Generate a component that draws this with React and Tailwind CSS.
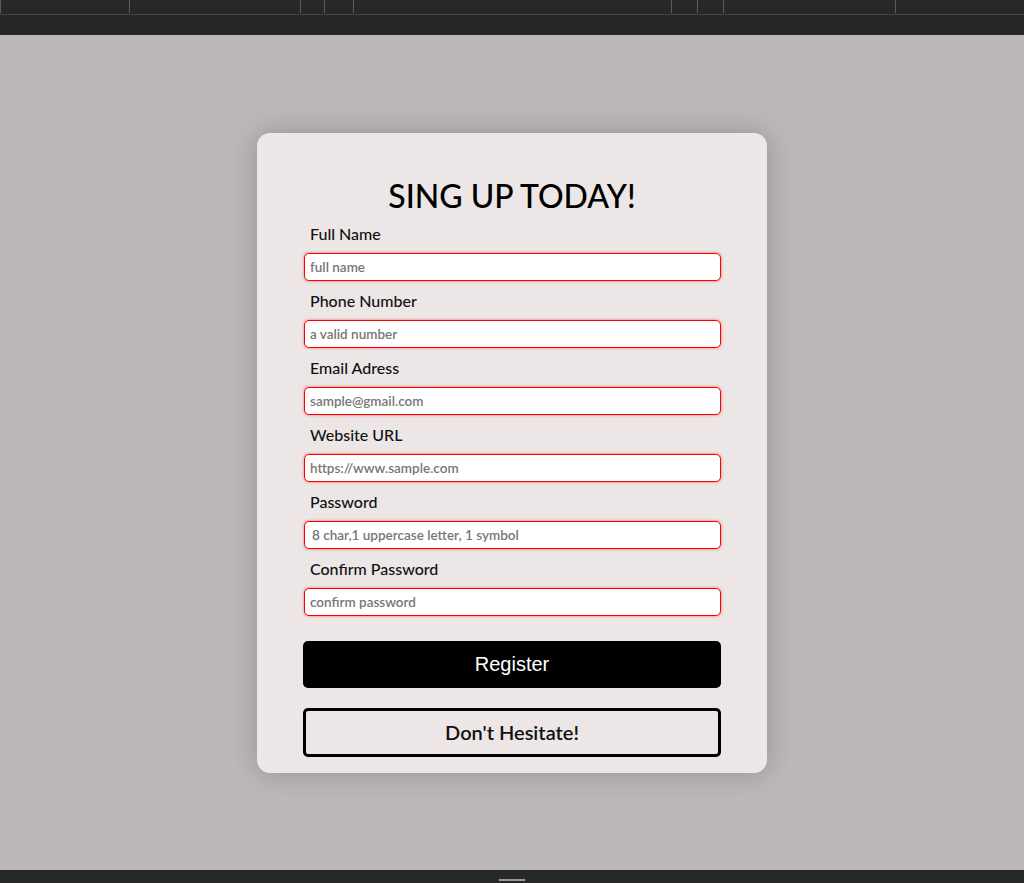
import React from 'react';

const fields = [
  { label: 'Full Name', placeholder: 'full name' },
  { label: 'Phone Number', placeholder: 'a valid number' },
  { label: 'Email Adress', placeholder: 'sample@gmail.com' },
  { label: 'Website URL', placeholder: 'https://www.sample.com' },
  { label: 'Password', placeholder: '8 char,1 uppercase letter, 1 symbol', indent: true },
  { label: 'Confirm Password', placeholder: 'confirm password' },
];

const TopBar = () => (
  <div className="shrink-0">
    <div className="h-[14px] bg-[#27282a] flex">
      <div className="w-px h-[13px] bg-[#5c5c5c]" />
      <div className="w-[128px]" />
      <div className="w-px h-[13px] bg-[#5c5c5c]" />
      <div className="w-[170px]" />
      <div className="w-px h-[13px] bg-[#5c5c5c]" />
      <div className="w-[23px]" />
      <div className="w-px h-[13px] bg-[#5c5c5c]" />
      <div className="w-[28px]" />
      <div className="w-px h-[13px] bg-[#5c5c5c]" />
      <div className="w-[317px]" />
      <div className="w-px h-[13px] bg-[#5c5c5c]" />
      <div className="w-[25px]" />
      <div className="w-px h-[13px] bg-[#5c5c5c]" />
      <div className="w-[25px]" />
      <div className="w-px h-[13px] bg-[#5c5c5c]" />
      <div className="w-[171px]" />
      <div className="w-px h-[13px] bg-[#5c5c5c]" />
    </div>
    <div className="h-px bg-[#454545]" />
    <div className="h-[20px] bg-[#272727]" />
  </div>
);

const BottomBar = () => (
  <div className="shrink-0 h-[13px] bg-[#27282a] flex justify-center items-end pb-[2px]">
    <div className="w-[26px] h-[2px] bg-[#9a9a9a]" />
  </div>
);

export default function App() {
  return (
    <div className="h-[883px] flex flex-col bg-[#bcb8b7] font-['Lato','Noto_Sans',sans-serif]">
      <TopBar />
      <main className="flex-1 flex items-center justify-center">
        <div className="w-[510px] h-[640px] bg-[#ece6e6] rounded-[13px] shadow-[0_0_28px_rgba(0,0,0,0.22)] px-[46px] pt-[44px] pb-[16px] flex flex-col">
          <h1 className="text-[32px] leading-[38px] font-medium text-black text-center">
            SING UP TODAY!
          </h1>
          <form className="flex flex-col mt-[9px]">
            {fields.map((f) => (
              <div key={f.label} className="flex flex-col">
                <label className="pl-[7px] text-[16px] leading-[19px] font-medium text-[#111]">{f.label}</label>
                <input
                  type="text"
                  placeholder={f.placeholder}
                  className={
                    'mt-[10px] mb-[10px] h-[28px] ml-px w-[417px] bg-white border border-[#ff0000] rounded-[5px] shadow-[0_0_3px_rgba(255,0,0,0.55)] text-[13.5px] font-semibold outline-none placeholder:text-[#767676] ' +
                    (f.indent ? 'pl-[7px]' : 'pl-[5px]')
                  }
                />
              </div>
            ))}
          </form>
          <button className="mt-[15px] h-[47px] w-full bg-black text-white rounded-[5px] text-[20px] font-['Liberation_Sans',Arial,sans-serif]">
            Register
          </button>
          <button className="mt-[20px] h-[49px] w-full border-[3px] border-black rounded-[5px] text-[20px] text-[#111] font-semibold">
            Don't Hesitate!
          </button>
        </div>
      </main>
      <BottomBar />
    </div>
  );
}
